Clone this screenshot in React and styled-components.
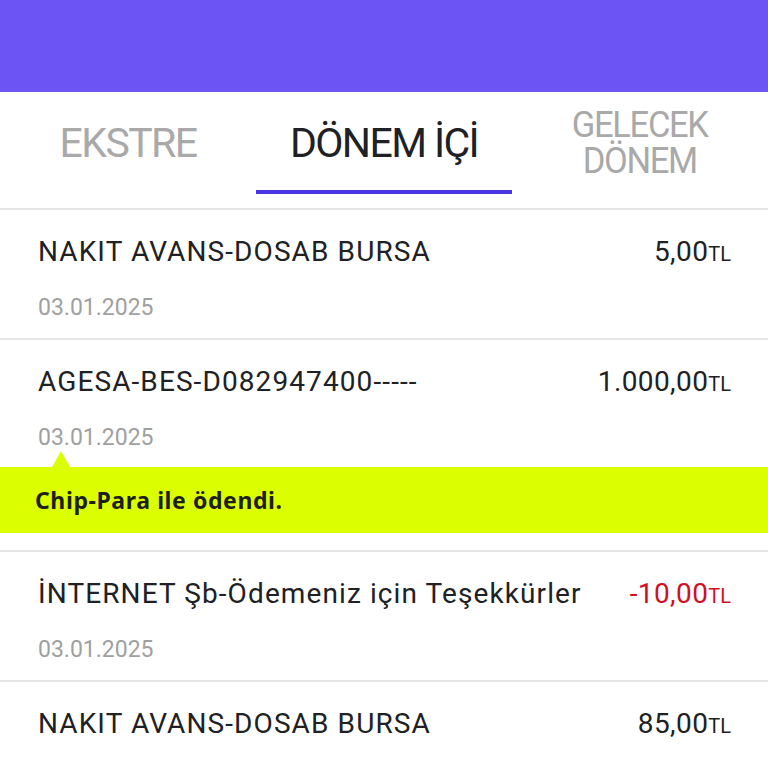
import React from "react";
import styled, { createGlobalStyle } from "styled-components";

const GlobalStyle = createGlobalStyle`
  html, body {
    margin: 0;
    padding: 0;
    background: #ffffff;
    overflow: hidden;
  }
  * {
    box-sizing: border-box;
  }
`;

const transactions = [
  { id: 1, title: "NAKIT AVANS-DOSAB BURSA", amount: "5,00", date: "03.01.2025" },
  {
    id: 2,
    title: "AGESA-BES-D082947400-----",
    amount: "1.000,00",
    date: "03.01.2025",
    note: "Chip-Para ile ödendi.",
  },
  {
    id: 3,
    title: "İNTERNET Şb-Ödemeniz için Teşekkürler",
    amount: "-10,00",
    date: "03.01.2025",
    negative: true,
  },
  { id: 4, title: "NAKIT AVANS-DOSAB BURSA", amount: "85,00", date: "03.01.2025" },
];

const tabs = [
  { id: "ekstre", label: ["EKSTRE"] },
  { id: "donem", label: ["DÖNEM İÇİ"], active: true },
  { id: "gelecek", label: ["GELECEK", "DÖNEM"] },
];

function App() {
  return (
    <>
      <GlobalStyle />
      <Page>
        <TopBar />

        <TabBar>
          {tabs.map((tab) => (
            <Tab key={tab.id} $active={tab.active}>
              <TabLabel $active={tab.active} $multi={tab.label.length > 1}>
                {tab.label.map((line) => (
                  <span key={line}>{line}</span>
                ))}
              </TabLabel>
            </Tab>
          ))}
        </TabBar>

        <List>
          {transactions.map((t) => (
            <Row key={t.id}>
              <RowMain>
                <Title>{t.title}</Title>
                <Amount $negative={t.negative}>
                  {t.amount}
                  <Currency>TL</Currency>
                </Amount>
              </RowMain>
              <DateText>{t.date}</DateText>

              {/* payment note bubble under the date */}
              {t.note && (
                <Note>
                  <NoteArrow />
                  {t.note}
                </Note>
              )}
            </Row>
          ))}
        </List>
      </Page>
    </>
  );
}

export default App;

const Page = styled.div`
  width: 768px;
  min-height: 768px;
  display: flex;
  flex-direction: column;
  font-family: Roboto, "Liberation Sans", sans-serif;
`;

const TopBar = styled.div`
  height: 92px;
  background: #6b53f4;
`;

// --------------------------------- Tabs

const TabBar = styled.div`
  display: grid;
  grid-template-columns: repeat(3, 1fr);
  height: 118px;
  border-bottom: 2px solid #e6e6e8;
`;

const Tab = styled.div`
  display: flex;
  align-items: center;
  justify-content: center;
  position: relative;
  padding-bottom: 14px;

  &::after {
    content: "";
    display: ${({ $active }) => ($active ? "block" : "none")};
    position: absolute;
    left: 0;
    right: 0;
    bottom: 14px;
    height: 4px;
    background: #4b37e4;
  }
`;

const TabLabel = styled.div`
  display: flex;
  flex-direction: column;
  align-items: center;
  font-size: ${({ $multi }) => ($multi ? "36px" : "41px")};
  line-height: ${({ $multi }) => ($multi ? "36px" : "46px")};
  letter-spacing: ${({ $multi }) => ($multi ? "-1.4px" : "-1.6px")};
  font-weight: 400;
  color: ${({ $active }) => ($active ? "#202124" : "#a9a9a9")};
  transform: ${({ $multi }) => ($multi ? "scaleX(0.96)" : "none")};

  > span {
    display: block;
    height: ${({ $multi }) => ($multi ? "36px" : "auto")};
    overflow: visible;
  }
`;

// --------------------------------- Transactions

const List = styled.div`
  display: flex;
  flex-direction: column;
`;

const Row = styled.div`
  padding: 25px 0 16px;
  border-bottom: 2px solid #e6e6e8;
`;

const RowMain = styled.div`
  display: flex;
  justify-content: space-between;
  align-items: baseline;
  padding: 0 37px 0 38px;
`;

const Title = styled.div`
  font-size: 28px;
  line-height: 34px;
  color: #202124;
  letter-spacing: 1.1px;
`;

const Amount = styled.div`
  font-size: 28px;
  line-height: 34px;
  color: ${({ $negative }) => ($negative ? "#d0101f" : "#202124")};
  letter-spacing: 0.4px;
  white-space: nowrap;
`;

const Currency = styled.span`
  font-size: 20px;
  letter-spacing: 0;
`;

const DateText = styled.div`
  margin-top: 23px;
  padding-left: 38px;
  font-size: 23px;
  line-height: 28px;
  color: #a0a0a0;
  letter-spacing: 0;
`;

const Note = styled.div`
  position: relative;
  margin-top: 15px;
  margin-bottom: 1px;
  height: 66px;
  display: flex;
  align-items: center;
  padding-left: 35px;
  background: #dcff00;
  font-family: "Noto Sans", Lato, sans-serif;
  font-weight: 700;
  font-size: 23px;
  letter-spacing: 0.6px;
  color: #1e1e1e;
`;

const NoteArrow = styled.span`
  position: absolute;
  left: 52px;
  top: -16px;
  width: 0;
  height: 0;
  border-left: 9px solid transparent;
  border-right: 9px solid transparent;
  border-bottom: 16px solid #dcff00;
`;
